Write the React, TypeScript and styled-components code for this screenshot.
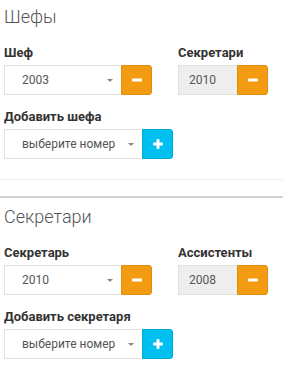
import React from "react";
import styled, { createGlobalStyle } from "styled-components";

const Global = createGlobalStyle`
  html, body { margin: 0; padding: 0; background: #fff; }
  body { font-family: Roboto, "Open Sans", Arial, sans-serif; }
  * { box-sizing: border-box; }
`;

const Section = styled.section`
  padding: 5px 4px 0 4px;
`;

const Title = styled.h3`
  margin: 0 0 15px 0;
  font-size: 18px;
  line-height: 24px;
  font-weight: 300;
  color: #555;
`;

const Row = styled.div`
  display: flex;
  gap: 26px;
  margin-bottom: 13px;
`;

const Field = styled.div`
  display: flex;
  flex-direction: column;
`;

const Label = styled.label`
  font-size: 13px;
  line-height: 18px;
  font-weight: 700;
  color: #333;
  margin-bottom: 3px;
`;

const Group = styled.div`
  display: flex;
  height: 30px;
`;

const SelectBox = styled.div<{ $w: number }>`
  position: relative;
  width: ${(p) => p.$w}px;
  height: 30px;
  border: 1px solid #e3e3e3;
  border-right: none;
  background: #fff;
  color: #555;
  font-size: 12px;
  line-height: 28px;
  padding-left: 17px;
  &::after {
    content: "";
    position: absolute;
    right: 8px;
    top: 13px;
    border-left: 3px solid transparent;
    border-right: 3px solid transparent;
    border-top: 3px solid #888;
  }
`;

const ReadOnly = styled.div<{ $w: number }>`
  width: ${(p) => p.$w}px;
  height: 30px;
  border: 1px solid #e0e0e0;
  border-right: none;
  background: #eee;
  color: #555;
  font-size: 12px;
  line-height: 28px;
  padding-left: 10px;
`;

const Btn = styled.button<{ $kind: "warn" | "info" }>`
  width: 31px;
  height: 30px;
  padding: 0;
  margin: 0;
  display: flex;
  align-items: center;
  justify-content: center;
  border-radius: 0 3px 3px 0;
  border: 1px solid ${(p) => (p.$kind === "warn" ? "#e08e0b" : "#00acd6")};
  background: ${(p) => (p.$kind === "warn" ? "#f39c12" : "#00c0ef")};
  cursor: pointer;
`;

const Divider = styled.div`
  margin-top: 20px;
  height: 1px;
  background: #eee;
`;

const Separator = styled.div`
  margin-top: 16px;
  margin-bottom: 2px;
  height: 2px;
  background: #d2d2d2;
`;

const MinusIcon = () => (
  <svg width="10" height="4" viewBox="0 0 10 4">
    <rect x="0" y="0.5" width="10" height="3" rx="1" fill="#fff" />
  </svg>
);

const PlusIcon = () => (
  <svg width="10" height="10" viewBox="0 0 10 10">
    <rect x="0" y="3.5" width="10" height="3" rx="1" fill="#fff" />
    <rect x="3.5" y="0" width="3" height="10" rx="1" fill="#fff" />
  </svg>
);

type Props = {
  title: string;
  mainLabel: string;
  mainValue: string;
  sideLabel: string;
  sideValue: string;
  addLabel: string;
};

const Block = ({ title, mainLabel, mainValue, sideLabel, sideValue, addLabel }: Props) => (
  <Section>
    <Title>{title}</Title>
    <Row>
      <Field>
        <Label>{mainLabel}</Label>
        <Group>
          <SelectBox $w={117}>{mainValue}</SelectBox>
          <Btn $kind="warn"><MinusIcon /></Btn>
        </Group>
      </Field>
      <Field>
        <Label>{sideLabel}</Label>
        <Group>
          <ReadOnly $w={59}>{sideValue}</ReadOnly>
          <Btn $kind="warn"><MinusIcon /></Btn>
        </Group>
      </Field>
    </Row>
    <Field>
      <Label>{addLabel}</Label>
      <Group>
        <SelectBox $w={138}>выберите номер</SelectBox>
        <Btn $kind="info"><PlusIcon /></Btn>
      </Group>
    </Field>
  </Section>
);

export default function App() {
  return (
    <>
      <Global />
      <Block
        title="Шефы"
        mainLabel="Шеф"
        mainValue="2003"
        sideLabel="Секретари"
        sideValue="2010"
        addLabel="Добавить шефа"
      />
      <Divider />
      <Separator />
      <Block
        title="Секретари"
        mainLabel="Секретарь"
        mainValue="2010"
        sideLabel="Ассистенты"
        sideValue="2008"
        addLabel="Добавить секретаря"
      />
    </>
  );
}
